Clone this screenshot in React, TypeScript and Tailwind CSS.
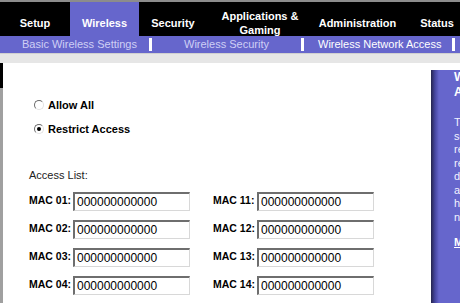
import React from "react";

const tabs = [
  { label: "Setup", width: "w-[70px]" },
  { label: "Wireless", width: "w-[69px]", active: true },
  { label: "Security", width: "w-[68px]" },
  { label: "Applications &\nGaming", width: "w-[106px]" },
  { label: "Administration", width: "w-[89px]" },
  { label: "Status", width: "w-[70px]" },
];

const helpLines = [
  "The Wireless Network Access",
  "screen allows you to",
  "restrict wireless access to",
  "registered clients. Enter",
  "devices' MAC addresses",
  "and only those",
  "hosts can reach your",
  "network.",
];

function Radio({ checked }: { checked?: boolean }) {
  return (
    <span className="flex h-[10px] w-[10px] items-center justify-center rounded-full border border-t-[#6a6a6a] border-l-[#6a6a6a] border-b-[#e2e2e2] border-r-[#e2e2e2] bg-white">
      {checked ? <span className="h-[4px] w-[4px] rounded-full bg-black" /> : null}
    </span>
  );
}

function MacField({ n }: { n: number }) {
  const id = String(n).padStart(2, "0");
  return (
    <div className="flex h-[20px] items-center">
      <span className="w-[44px] shrink-0 whitespace-nowrap text-[10.5px] font-bold text-black">MAC {id}:</span>
      <input
        readOnly
        value="000000000000"
        className="h-[19px] w-[117px] border-t-2 border-l-2 border-b border-r border-t-[#6e6e6e] border-l-[#6e6e6e] border-b-[#d8d8d8] border-r-[#d8d8d8] bg-white pl-[2px] text-[12px] leading-none text-black outline-none"
      />
    </div>
  );
}

export default function App() {
  return (
    <div className="h-[303px] w-[460px] overflow-hidden bg-white font-['Liberation_Sans',Arial,sans-serif]">
      <div className="h-[2px] bg-[#8c8c8c]" />

      <nav className="flex h-[34px] bg-black text-[11px] font-bold leading-[14px] text-white">
        {tabs.map((t) => (
          <div
            key={t.label}
            className={`${t.width} flex shrink-0 items-center justify-center whitespace-pre-line pt-[7px] text-center ${t.active ? "bg-[#6666cc]" : ""}`}
          >
            {t.label}
          </div>
        ))}
      </nav>

      <div className="flex h-[17px] items-center bg-[#6666cc] text-[11px] leading-none">
        <div className="w-[149px] shrink-0 pl-[22px] text-[#cfcff5]">Basic Wireless Settings</div>
        <span className="h-[13px] w-[3px] shrink-0 bg-white" />
        <div className="w-[149px] shrink-0 pl-[32px] text-[#cfcff5]">Wireless Security</div>
        <span className="h-[13px] w-[3px] shrink-0 bg-white" />
        <div className="w-[148px] shrink-0 whitespace-nowrap pl-[14px] text-white">Wireless Network Access</div>
        <span className="h-[13px] w-[3px] shrink-0 bg-white" />
      </div>

      <div className="h-[10px] border-t border-[#d0d0d0] bg-[#e6e6e6]" />

      <div className="flex h-[240px]">
        <div className="flex w-[3px] shrink-0 flex-col">
          <div className="h-[25px] bg-black" />
          <div className="flex-1 bg-[#a0a0a0]" />
        </div>

        <div className="flex-1 pl-[26px] pt-[34px]">
          <div className="flex flex-col gap-[8px] pl-[5px] text-[11px] font-bold text-black">
            <label className="flex h-[16px] items-center gap-[4px]">
              <Radio />
              Allow All
            </label>
            <label className="flex h-[16px] items-center gap-[4px]">
              <Radio checked />
              Restrict Access
            </label>
          </div>

          <div className="mt-[31px] h-[14px] text-[11px] leading-[14px] text-[#222]">Access List:</div>

          <div className="mt-[9px] grid grid-cols-[184px_184px] gap-y-[8px]">
            {[1, 11, 2, 12, 3, 13, 4, 14].map((n) => (
              <MacField key={n} n={n} />
            ))}
          </div>
        </div>

        <aside className="mt-[7px] w-[29px] shrink-0 overflow-hidden bg-[linear-gradient(to_right,#24244e,#4646a0_4px,#6666cc_8px)] text-white">
          <div className="w-[200px] whitespace-nowrap pl-[23px]">
            <div className="text-[12px] font-bold leading-[15px]">
              <div>Wireless Network</div>
              <div>Access:</div>
            </div>
            <div className="mt-[16px] text-[11px] leading-[13.5px] text-[#f2f2ff]">
              {helpLines.map((l) => (
                <div key={l}>{l}</div>
              ))}
            </div>
            <div className="mt-[12px] text-[11px] font-bold leading-[13.5px] underline">More...</div>
          </div>
        </aside>
      </div>
    </div>
  );
}
